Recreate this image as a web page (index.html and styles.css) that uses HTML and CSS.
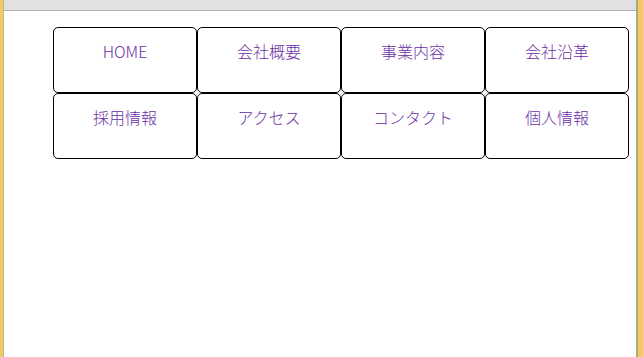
FILE: index.html
```html
<!DOCTYPE html>
<html lang="ja">
<head>
  <meta charset="UTF-8" />
  <title>メニュー</title>
  <link rel="stylesheet" href="styles.css">
</head>
<body>
  <div class="window">
    <div class="inner">
      <div class="toolbar"></div>

      <!-- メニュー -->
      <ul class="menu">
        <li><a href="#">HOME</a></li>
        <li><a href="#">会社概要</a></li>
        <li><a href="#">事業内容</a></li>
        <li><a href="#">会社沿革</a></li>
        <li><a href="#">採用情報</a></li>
        <li><a href="#">アクセス</a></li>
        <li><a href="#">コンタクト</a></li>
        <li><a href="#">個人情報</a></li>
      </ul>
    </div>
  </div>
</body>
</html>
```

FILE: styles.css
```css
body, html {
  height: 100%;
  margin: 0;
  font-family: "Noto Sans CJK JP", "DejaVu Sans", sans-serif;
  background-color: #ffffff;
  overflow: hidden;
}

.window {
  height: 100%;
  box-sizing: border-box;
  border-left: 3px solid #f5c95c;
  border-right: 5px solid #f5c95c;
}

.inner {
  height: 100%;
  box-sizing: border-box;
  border-left: 1px solid #b4b9a4;
  border-right: 2px solid #a3ab8e;
}

.toolbar {
  height: 10px;
  background-color: #e1e1e1;
  border-bottom: 1px solid #b3b3b3;
}

.menu {
  list-style: none;
  margin: 16px 0 0 49px;
  padding: 0;
  display: grid;
  grid-template-columns: repeat(4, 144px);
}

.menu li {
  height: 66px;
  box-sizing: border-box;
  border: 1px solid #000000;
  border-radius: 5px;
  text-align: center;
}

.menu a {
  display: block;
  padding-top: 13px;
  font-size: 16px;
  font-weight: 300;
  line-height: 20px;
  color: #6a2fa3;
  text-decoration: none;
}
```
